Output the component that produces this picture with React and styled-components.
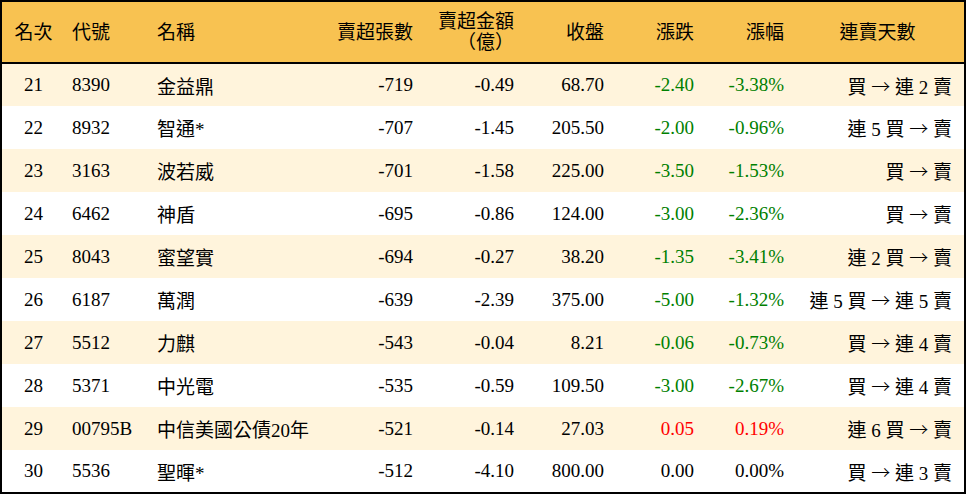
import React from 'react'
import styled, { createGlobalStyle } from 'styled-components'

const GlobalStyle = createGlobalStyle`
  html, body {
    margin: 0;
    padding: 0;
    background: #fff;
  }
  body {
    font-family: "Liberation Serif", "Noto Sans CJK TC", serif;
  }
`

const rows = [
  { rank: 21, code: '8390', name: '金益鼎', lots: '-719', amount: '-0.49', close: '68.70', change: '-2.40', pct: '-3.38%', streak: ['買', '連 2 賣'] },
  { rank: 22, code: '8932', name: '智通*', lots: '-707', amount: '-1.45', close: '205.50', change: '-2.00', pct: '-0.96%', streak: ['連 5 買', '賣'] },
  { rank: 23, code: '3163', name: '波若威', lots: '-701', amount: '-1.58', close: '225.00', change: '-3.50', pct: '-1.53%', streak: ['買', '賣'] },
  { rank: 24, code: '6462', name: '神盾', lots: '-695', amount: '-0.86', close: '124.00', change: '-3.00', pct: '-2.36%', streak: ['買', '賣'] },
  { rank: 25, code: '8043', name: '蜜望實', lots: '-694', amount: '-0.27', close: '38.20', change: '-1.35', pct: '-3.41%', streak: ['連 2 買', '賣'] },
  { rank: 26, code: '6187', name: '萬潤', lots: '-639', amount: '-2.39', close: '375.00', change: '-5.00', pct: '-1.32%', streak: ['連 5 買', '連 5 賣'] },
  { rank: 27, code: '5512', name: '力麒', lots: '-543', amount: '-0.04', close: '8.21', change: '-0.06', pct: '-0.73%', streak: ['買', '連 4 賣'] },
  { rank: 28, code: '5371', name: '中光電', lots: '-535', amount: '-0.59', close: '109.50', change: '-3.00', pct: '-2.67%', streak: ['買', '連 4 賣'] },
  { rank: 29, code: '00795B', name: '中信美國公債20年', lots: '-521', amount: '-0.14', close: '27.03', change: '0.05', pct: '0.19%', streak: ['連 6 買', '賣'] },
  { rank: 30, code: '5536', name: '聖暉*', lots: '-512', amount: '-4.10', close: '800.00', change: '0.00', pct: '0.00%', streak: ['買', '連 3 賣'] },
]

const Table = styled.table`
  width: 966px;
  border-collapse: collapse;
  table-layout: fixed;
  border: 2px solid #000;
  font-size: 19px;
  color: #000;
`

const HeadRow = styled.tr`
  background: #f8c251;
  height: 62px;
  border-bottom: 2px solid #000;
`

const Row = styled.tr`
  height: 43px;
  background: ${p => (p.$odd ? '#fff4dc' : '#fff')};
`

const Th = styled.th`
  font-weight: normal;
  padding: 0 7px;
  line-height: 21px;
  vertical-align: middle;
  text-align: ${p => p.$align || 'left'};
  white-space: nowrap;
`

const Td = styled.td`
  padding: 0 ${p => p.$padRight || 7}px 0 7px;
  vertical-align: middle;
  text-align: ${p => p.$align || 'left'};
  white-space: nowrap;
  color: ${p => p.$color || '#000'};
`

const Arrow = styled.span`
  font-family: "Noto Sans CJK TC", sans-serif;
  font-weight: 300;
`

const tone = v => {
  const n = parseFloat(v)
  if (n < 0) return '#008000'
  if (n > 0) return '#ff0000'
  return '#000'
}

export default function App() {
  return (
    <>
      <GlobalStyle />
      <Table>
        <colgroup>
          <col style={{ width: 64 }} />
          <col style={{ width: 85 }} />
          <col style={{ width: 179 }} />
          <col style={{ width: 91 }} />
          <col style={{ width: 101 }} />
          <col style={{ width: 90 }} />
          <col style={{ width: 90 }} />
          <col style={{ width: 90 }} />
          <col />
        </colgroup>
        <thead>
          <HeadRow>
            <Th $align="center">名次</Th>
            <Th>代號</Th>
            <Th>名稱</Th>
            <Th $align="right">賣超張數</Th>
            <Th $align="right">賣超金額<br />（億）</Th>
            <Th $align="right">收盤</Th>
            <Th $align="right">漲跌</Th>
            <Th $align="right">漲幅</Th>
            <Th $align="center">連賣天數</Th>
          </HeadRow>
        </thead>
        <tbody>
          {rows.map((r, i) => (
            <Row key={r.rank} $odd={i % 2 === 0}>
              <Td $align="center">{r.rank}</Td>
              <Td>{r.code}</Td>
              <Td>{r.name}</Td>
              <Td $align="right">{r.lots}</Td>
              <Td $align="right">{r.amount}</Td>
              <Td $align="right">{r.close}</Td>
              <Td $align="right" $color={tone(r.change)}>{r.change}</Td>
              <Td $align="right" $color={tone(r.pct)}>{r.pct}</Td>
              <Td $align="right" $padRight={12}>
                {r.streak[0]} <Arrow>→</Arrow> {r.streak[1]}
              </Td>
            </Row>
          ))}
        </tbody>
      </Table>
    </>
  )
}
